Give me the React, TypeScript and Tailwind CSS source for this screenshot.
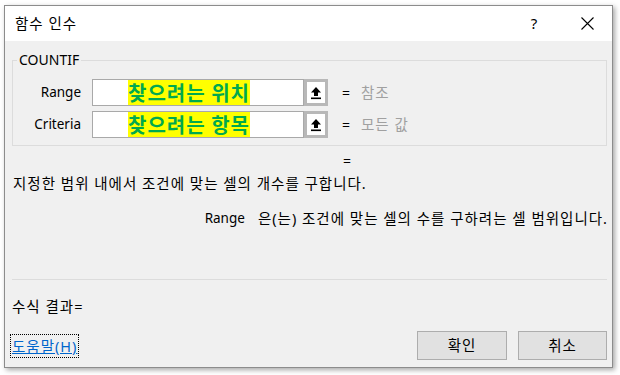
import React from "react";

const FONT = '"Noto Sans", "Noto Sans CJK KR", sans-serif';

function UpArrowButton() {
  return (
    <div className="w-[24px] h-[27px] border-[3px] border-[#b8b8b8] bg-white flex items-center justify-center">
      <svg width="12" height="14" viewBox="0 0 12 14">
        <path d="M6 1 L11 6.5 L8 6.5 L8 10 L4 10 L4 6.5 L1 6.5 Z" fill="#000" />
        <rect x="1" y="11.5" width="10" height="1.6" fill="#000" />
      </svg>
    </div>
  );
}

function ArgRow({ label, value, hint }: { label: string; value: string; hint: string }) {
  return (
    <div className="flex items-center h-[27px]">
      <div className="w-[68px] text-right text-[13.5px] tracking-normal text-black">{label}</div>
      <div className="ml-[11px] w-[212px] h-[27px] border border-[#a9a9a9] bg-white flex items-stretch pl-[35px]">
        <span
          className="bg-[#ffff00] text-[#00a94f] font-bold text-[20px] tracking-[1px] leading-[25px] whitespace-pre"
          style={{ fontFamily: '"Noto Sans CJK KR", sans-serif' }}
        >
          {value}
        </span>
      </div>
      <UpArrowButton />
      <div className="ml-[14px] text-[14px] text-black w-[19px]">=</div>
      <div className="text-[14.5px] tracking-[1px] text-[#a0a0a0]">{hint}</div>
    </div>
  );
}

export default function App() {
  return (
    <div className="w-[620px] h-[375px] bg-white pl-[4px] pt-[5px]" style={{ fontFamily: FONT }}>
      <div className="w-[609px] h-[363px] border border-[#8c8c8c] shadow-[2px_2px_5px_rgba(0,0,0,0.35)] flex flex-col bg-[#f0f0f0]">
        {/* Title bar */}
        <div className="h-[35px] bg-white flex items-center">
          <div className="pl-[10px] text-[14.5px] tracking-[1px] text-black flex-1">함수 인수</div>
          <div className="w-[14px] text-[15px] text-black text-center">?</div>
          <div className="ml-[40px] mr-[18px] flex items-center">
            <svg width="13" height="13" viewBox="0 0 13 13">
              <path d="M0.5 0.5 L12.5 12.5 M12.5 0.5 L0.5 12.5" stroke="#000" strokeWidth="1.1" />
            </svg>
          </div>
        </div>

        {/* Body */}
        <div className="flex-1 flex flex-col text-[14.5px] tracking-[1px] text-black">
          <fieldset className="mt-[11px] ml-[7px] mr-[5px] border border-[#dcdcdc] pb-[7px]">
            <legend className="ml-[4px] px-[2px] text-[14px] tracking-normal leading-[16px] text-black">COUNTIF</legend>
            <div className="pt-[11px] flex flex-col gap-[5px]">
              <ArgRow label="Range" value="찾으려는 위치" hint="참조" />
              <ArgRow label="Criteria" value="찾으려는 항목" hint="모든 값" />
            </div>
          </fieldset>

          <div className="mt-[7px] h-[16px] leading-[16px] pl-[338px] text-[14px] tracking-normal">=</div>
          <div className="mt-[6px] h-[16px] leading-[16px] pl-[8px]">
            지정한 범위 내에서 조건에 맞는 셀의 개수를 구합니다.
          </div>
          <div className="mt-[19px] h-[16px] leading-[16px] pr-[4px] flex justify-end whitespace-pre">
            <span className="text-[13.5px] tracking-normal">Range</span>
            <span className="ml-[13px]">은(는) 조건에 맞는 셀의 수를 구하려는 셀 범위입니다.</span>
          </div>

          <div className="mt-[53px] ml-[7px] mr-[5px] h-px bg-[#dcdcdc]" />

          <div className="mt-[18px] h-[16px] leading-[16px] pl-[7px]">수식 결과=</div>

          <div className="mt-[17px] flex items-center pl-[5px] pr-[5px]">
            <div className="h-[24px] px-[1px] border border-dotted border-black flex items-center">
              <span className="text-[#0066cc] underline leading-[16px]">도움말(H)</span>
            </div>
            <div className="flex-1" />
            <div className="w-[90px] h-[29px] bg-[#e1e1e1] border border-[#adadad] flex items-center justify-center">
              확인
            </div>
            <div className="ml-[11px] w-[89px] h-[29px] bg-[#e1e1e1] border border-[#adadad] flex items-center justify-center">
              취소
            </div>
          </div>
        </div>
      </div>
    </div>
  );
}
